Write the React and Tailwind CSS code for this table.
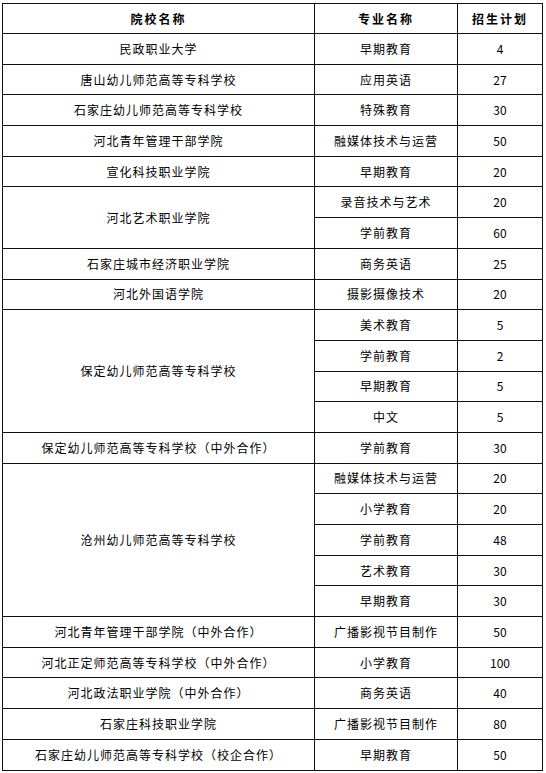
import React from "react";

const rows = [
  { school: "民政职业大学", majors: [["早期教育", "4"]] },
  { school: "唐山幼儿师范高等专科学校", majors: [["应用英语", "27"]] },
  { school: "石家庄幼儿师范高等专科学校", majors: [["特殊教育", "30"]] },
  { school: "河北青年管理干部学院", majors: [["融媒体技术与运营", "50"]] },
  { school: "宣化科技职业学院", majors: [["早期教育", "20"]] },
  { school: "河北艺术职业学院", majors: [["录音技术与艺术", "20"], ["学前教育", "60"]] },
  { school: "石家庄城市经济职业学院", majors: [["商务英语", "25"]] },
  { school: "河北外国语学院", majors: [["摄影摄像技术", "20"]] },
  {
    school: "保定幼儿师范高等专科学校",
    majors: [["美术教育", "5"], ["学前教育", "2"], ["早期教育", "5"], ["中文", "5"]],
  },
  { school: "保定幼儿师范高等专科学校（中外合作）", majors: [["学前教育", "30"]] },
  {
    school: "沧州幼儿师范高等专科学校",
    majors: [
      ["融媒体技术与运营", "20"],
      ["小学教育", "20"],
      ["学前教育", "48"],
      ["艺术教育", "30"],
      ["早期教育", "30"],
    ],
  },
  { school: "河北青年管理干部学院（中外合作）", majors: [["广播影视节目制作", "50"]] },
  { school: "河北正定师范高等专科学校（中外合作）", majors: [["小学教育", "100"]] },
  { school: "河北政法职业学院（中外合作）", majors: [["商务英语", "40"]] },
  { school: "石家庄科技职业学院", majors: [["广播影视节目制作", "80"]] },
  { school: "石家庄幼儿师范高等专科学校（校企合作）", majors: [["早期教育", "50"]] },
];

const cell = "border border-[#111] text-center align-middle p-0 whitespace-nowrap";

export default function App() {
  return (
    <div className="bg-white w-[546px] h-[773px] pt-[3px] pl-[2px]" style={{ fontFamily: '"Noto Sans CJK SC", "Liberation Sans", sans-serif' }}>
      <table className="border-collapse table-fixed w-[540px] text-[12px] text-black tracking-[1px] leading-none">
        <colgroup>
          <col className="w-[312px]" />
          <col className="w-[143px]" />
          <col className="w-[85px]" />
        </colgroup>
        <thead>
          <tr className="h-[30px]">
            <th className={cell + " font-bold tracking-[2px]"}>院校名称</th>
            <th className={cell + " font-bold tracking-[2px]"}>专业名称</th>
            <th className={cell + " font-bold tracking-[2px]"}>招生计划</th>
          </tr>
        </thead>
        <tbody>
          {rows.flatMap((r, i) =>
            r.majors.map((m, j) => (
              <tr key={i + "-" + j} className="h-[30.7px]">
                {j === 0 && (
                  <td className={cell} rowSpan={r.majors.length}>
                    {r.school}
                  </td>
                )}
                <td className={cell}>{m[0]}</td>
                <td className={cell + " tracking-normal"}>{m[1]}</td>
              </tr>
            ))
          )}
        </tbody>
      </table>
    </div>
  );
}
